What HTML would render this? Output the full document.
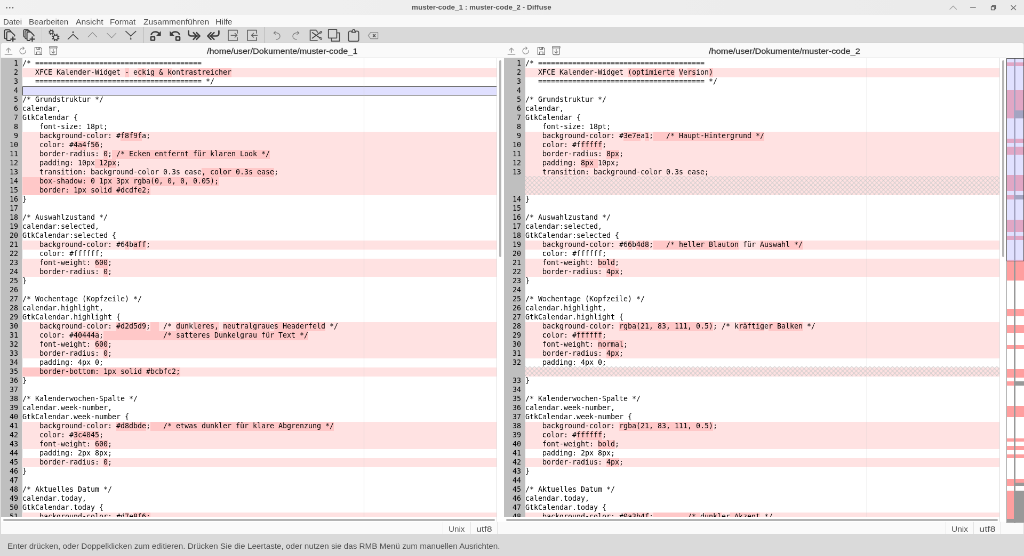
<!DOCTYPE html>
<html lang="de">
<head>
<meta charset="utf-8">
<title>muster-code_1 : muster-code_2 - Diffuse</title>
<style>
html,body{margin:0;padding:0;background:#dadada;overflow:hidden;}
body{width:1024px;height:556px;position:relative;}
#root{position:absolute;left:0;top:0;width:1920px;height:1043px;transform:scale(0.533333);transform-origin:0 0;
  font-family:"Liberation Sans","DejaVu Sans",sans-serif;font-size:14.5px;color:#505050;overflow:hidden;will-change:transform;}
#root div,#root svg,#root span{position:absolute;box-sizing:border-box;}
.t{white-space:nowrap;transform-origin:0 50%;line-height:20px;height:20px;}
#titlebar{left:0;top:0;width:1920px;height:28px;background:linear-gradient(90deg,#f1f1f1,#ebebeb);}
#menubar{left:0;top:28px;width:1920px;height:23px;background:#f9f9f9;}
#toolbar{left:0;top:51px;width:1920px;height:29.5px;background:#d9d9d9;border-bottom:1.2px solid #cecece;}
.ti{top:3.7px;width:22px;height:22px;overflow:visible;}
.tsep{top:0;width:1.2px;height:29.5px;background:#c6c6c6;}
#panel{left:1.5px;top:80.5px;width:1917px;height:921px;background:#fafafa;border-radius:3px 3px 0 0;}
.hi{top:6.5px;width:16px;height:16px;overflow:visible;}
/* code panes */
.pane{top:109px;height:859.5px;background:#fff;overflow:hidden;}
.gut{left:0;top:0;width:40px;height:100%;background:#bfbfbf;}
.in{left:0;top:1.6px;width:100%;}
.in p{margin:0;padding:0;height:17px;line-height:17px;white-space:pre;box-sizing:border-box;position:relative;
  font-family:"DejaVu Sans Mono","Liberation Mono",monospace;font-size:13.33px;letter-spacing:-0.025px;color:#000;}
.gut p{text-align:right;padding-right:7.5px;top:-0.8px;}
.code{left:40px;top:0;right:0;height:100%;}
.code .in p{padding-left:0.5px;}
.code p{line-height:15.3px;}
.code p.c{background:#ffe2e2;}
.code p.cur{background:#e0e0ff;border:1px solid #333;border-right:0;}
.code p.h{background-color:#ffe2e2;}
.code p.h svg{position:absolute;left:0;top:-1.5px;width:100%;height:18.5px;}
.code i{font-style:normal;background:#ffc8c8;display:inline-block;height:17px;vertical-align:top;}
.margin{top:0;width:1px;height:100%;background:#cccccc;left:680px;}
.vs{width:3.5px;background:#b6b6b6;border-radius:2px;}
.hs{height:3.5px;background:#b4b4b4;border-radius:2px;}
.trough{background:#fff;}
/* status row */
.ssep{top:978px;width:1px;height:23px;background:#e2e2e2;}
/* map */
#map{left:1887px;top:109px;width:33px;height:871.5px;background:#fff;overflow:hidden;}
#map div{position:absolute;}
#mapdiv{left:1901.4px;top:109px;width:2.8px;height:871.5px;background:#999;}
#mapleft{left:1886.5px;top:109px;width:1.4px;height:871.5px;background:#999;}
#view{left:1886.5px;top:109px;width:33.5px;height:381px;background:rgba(179,179,255,.4);border:1.6px solid #4a4a4a;}
#statusbar{left:0;top:1001.5px;width:1920px;height:41.5px;background:#dadada;}
</style>
</head>
<body>
<div id="root">
  <svg style="left:0;top:0;width:0;height:0"><defs><pattern id="hx" patternUnits="userSpaceOnUse" width="8.5" height="8.5"><path d="M-1 -1 L9.5 9.5 M9.5 -1 L-1 9.5" stroke="#cccccc" stroke-width="1.1" fill="none"/></pattern></defs></svg>
  <div id="titlebar">
    
<svg style="left:0;top:0;width:1920px;height:28px" viewBox="0 0 1920 28">
  <g fill="#555"><circle cx="12.6" cy="14.6" r="1.25"/><circle cx="18.3" cy="14.6" r="1.25"/><circle cx="24" cy="14.6" r="1.25"/></g>
  <g fill="none" stroke-linecap="round" stroke-linejoin="round">
    <path d="M1781 17.4 L1787.2 11.3 L1793.4 17.4" stroke="#9a9a9a" stroke-width="1.3"/>
    <path d="M1819.6 14.3 H1829.2" stroke="#7a7a7a" stroke-width="1.5"/>
    <path d="M1858.6 12.4 H1865 V18.4 H1858.6 Z M1860.6 12.2 V10.6 H1866.8 V16.4 H1865.2" stroke="#5a5a5a" stroke-width="1.5"/>
    <path d="M1896 10.4 L1904.6 18.6 M1904.6 10.4 L1896 18.6" stroke="#666" stroke-width="1.4"/>
  </g>
</svg>

    <div class="t" id="title" style="left:771.58px;top:4.06px;transform:scaleX(1.0377);font-size:13px;color:#555;font-weight:bold">muster-code_1 : muster-code_2 - Diffuse</div>
  </div>
  <div id="menubar">
    <div class="t" id="m1" style="left:6.11px;top:3.00px;transform:scaleX(1.0354);">Datei</div>
    <div class="t" id="m2" style="left:53.90px;top:3.00px;transform:scaleX(1.0596);">Bearbeiten</div>
    <div class="t" id="m3" style="left:141.56px;top:3.00px;transform:scaleX(1.0838);">Ansicht</div>
    <div class="t" id="m4" style="left:205.79px;top:3.00px;transform:scaleX(1.0480);">Format</div>
    <div class="t" id="m5" style="left:268.60px;top:3.00px;transform:scaleX(1.0857);">Zusammenführen</div>
    <div class="t" id="m6" style="left:404.02px;top:3.00px;transform:scaleX(1.0874);">Hilfe</div>
  </div>
  <div id="toolbar">
<svg class="ti" style="left:7.0px" viewBox="0 0 22 22"><g fill="none" stroke="#3c3c3c" stroke-width="2.0" stroke-linecap="round" stroke-linejoin="round" ><path d="M5 17.4 H3.4 a2 2 0 0 1 -2 -2 V3 a2 2 0 0 1 2 -2 H10.6 l2.6 2.6"/><path d="M12.4 21 H7.6 a2 2 0 0 1 -2 -2 V6.6 a2 2 0 0 1 2 -2 H13.8 L20.4 11 V12.6"/><path d="M17.2 14.4 V22.2 M13.2 18.4 H21.4" stroke-width="2.3"/></g></svg>
<svg class="ti" style="left:43.0px" viewBox="0 0 22 22"><g fill="none" stroke="#3c3c3c" stroke-width="2.0" stroke-linecap="round" stroke-linejoin="round" ><path d="M3 14.6 a2 2 0 0 1 -1.7 -2 V2.6 a2 2 0 0 1 2 -2 H9.4 l2.2 2.2" stroke-width="1.6"/><path d="M6 17.4 a2 2 0 0 1 -2 -2 V4.8 a2 2 0 0 1 2 -2 H12 l2.8 2.8" stroke-width="1.6"/><path d="M13 21 H9.6 a2 2 0 0 1 -2 -2 V7 a2 2 0 0 1 2 -2 H14.6 L20.6 11.4 V12.6"/><path d="M17.4 14.4 V22.2 M13.4 18.4 H21.6" stroke-width="2.3"/></g></svg>
<svg class="ti" style="left:90.0px" viewBox="0 0 22 22"><g fill="none" stroke="#3c3c3c" stroke-width="1.6" stroke-linecap="round" stroke-linejoin="round" ><circle cx="6.3" cy="5.3" r="3.0" stroke-width="1.5"/><path d="M9.35 6.56 L11.10 7.29" stroke-width="1.6" stroke-linecap="butt"/><path d="M7.56 8.35 L8.29 10.10" stroke-width="1.6" stroke-linecap="butt"/><path d="M5.04 8.35 L4.31 10.10" stroke-width="1.6" stroke-linecap="butt"/><path d="M3.25 6.56 L1.50 7.29" stroke-width="1.6" stroke-linecap="butt"/><path d="M3.25 4.04 L1.50 3.31" stroke-width="1.6" stroke-linecap="butt"/><path d="M5.04 2.25 L4.31 0.50" stroke-width="1.6" stroke-linecap="butt"/><path d="M7.56 2.25 L8.29 0.50" stroke-width="1.6" stroke-linecap="butt"/><path d="M9.35 4.04 L11.10 3.31" stroke-width="1.6" stroke-linecap="butt"/><circle cx="14.4" cy="15.2" r="4.3" stroke-width="1.9"/><path d="M18.65 16.96 L21.14 17.99" stroke-width="2.1" stroke-linecap="butt"/><path d="M16.16 19.45 L17.19 21.94" stroke-width="2.1" stroke-linecap="butt"/><path d="M12.64 19.45 L11.61 21.94" stroke-width="2.1" stroke-linecap="butt"/><path d="M10.15 16.96 L7.66 17.99" stroke-width="2.1" stroke-linecap="butt"/><path d="M10.15 13.44 L7.66 12.41" stroke-width="2.1" stroke-linecap="butt"/><path d="M12.64 10.95 L11.61 8.46" stroke-width="2.1" stroke-linecap="butt"/><path d="M16.16 10.95 L17.19 8.46" stroke-width="2.1" stroke-linecap="butt"/><path d="M18.65 13.44 L21.14 12.41" stroke-width="2.1" stroke-linecap="butt"/></g></svg>
<svg class="ti" style="left:126.0px" viewBox="0 0 22 22"><g fill="none" stroke="#444" stroke-width="1.6" stroke-linecap="round" stroke-linejoin="round" ><path d="M1.5 18.4 L11 9.4 L20.5 18.4"/><circle cx="11" cy="5.2" r="1.5" fill="#444" stroke="none"/></g></svg>
<svg class="ti" style="left:162.0px" viewBox="0 0 22 22"><g fill="none" stroke="#858585" stroke-width="1.15" stroke-linecap="round" stroke-linejoin="round" ><path d="M3.2 14.4 L11.4 5.8 L19.6 14.4"/></g></svg>
<svg class="ti" style="left:198.0px" viewBox="0 0 22 22"><g fill="none" stroke="#858585" stroke-width="1.15" stroke-linecap="round" stroke-linejoin="round" ><path d="M2.8 7.4 L11.3 15.8 L19.6 7.4"/></g></svg>
<svg class="ti" style="left:234.0px" viewBox="0 0 22 22"><g fill="none" stroke="#444" stroke-width="1.6" stroke-linecap="round" stroke-linejoin="round" ><path d="M1.8 3.7 L11.2 12.4 L20.8 3.7"/><path d="M11.2 12.6 V16" stroke-width="1" stroke="#666"/><circle cx="11.2" cy="17.9" r="1.4" fill="#444" stroke="none"/></g></svg>
<svg class="ti" style="left:281.0px" viewBox="0 0 22 22"><g fill="none" stroke="#3c3c3c" stroke-width="2" stroke-linecap="round" stroke-linejoin="round" ><path d="M2.6 10.4 C3 7 6.4 4.7 10.2 4.7 C13.8 4.7 16.2 6.2 17.6 8.6" stroke-width="2.7" stroke-linecap="butt"/><path d="M20.6 3.2 V12.2 H11.8 Z" fill="#3c3c3c" stroke="none"/><rect x="1.9" y="14" width="7.1" height="6.5" rx="0.8" stroke-width="2.5"/></g></svg>
<svg class="ti" style="left:317.0px" viewBox="0 0 22 22"><g fill="none" stroke="#3c3c3c" stroke-width="2" stroke-linecap="round" stroke-linejoin="round" transform="translate(22,0) scale(-1,1)"><path d="M2.6 10.4 C3 7 6.4 4.7 10.2 4.7 C13.8 4.7 16.2 6.2 17.6 8.6" stroke-width="2.7" stroke-linecap="butt"/><path d="M20.6 3.2 V12.2 H11.8 Z" fill="#3c3c3c" stroke="none"/><rect x="1.9" y="14" width="7.1" height="6.5" rx="0.8" stroke-width="2.5"/></g></svg>
<svg class="ti" style="left:353.0px" viewBox="0 0 22 22"><g fill="none" stroke="#3c3c3c" stroke-width="2" stroke-linecap="round" stroke-linejoin="round" ><path d="M0.6 3 V7.8 Q0.6 12.5 5.6 12.5 H17.5" stroke-width="2.7"/><path d="M9.6 6.2 L15.8 12.5 L9.6 18.8 M15.4 6.2 L21.6 12.5 L15.4 18.8" stroke-width="2.6"/></g></svg>
<svg class="ti" style="left:389.0px" viewBox="0 0 22 22"><g fill="none" stroke="#3c3c3c" stroke-width="2" stroke-linecap="round" stroke-linejoin="round" transform="translate(22,0) scale(-1,1)"><path d="M0.6 3 V7.8 Q0.6 12.5 5.6 12.5 H17.5" stroke-width="2.7"/><path d="M9.6 6.2 L15.8 12.5 L9.6 18.8 M15.4 6.2 L21.6 12.5 L15.4 18.8" stroke-width="2.6"/></g></svg>
<svg class="ti" style="left:425.0px" viewBox="0 0 22 22"><g fill="none" stroke="#646464" stroke-width="2" stroke-linecap="round" stroke-linejoin="round" ><path d="M20 7.2 V1.6 H3 V21 H20 V15.4" stroke-width="1.7"/><path d="M8.2 11.2 H19.4 M15.4 7.4 L19.6 11.2 L15.4 15" stroke-width="1.5"/></g></svg>
<svg class="ti" style="left:461.0px" viewBox="0 0 22 22"><g fill="none" stroke="#646464" stroke-width="2" stroke-linecap="round" stroke-linejoin="round" ><path d="M20 7.2 V1.6 H3 V21 H20 V15.4" stroke-width="1.7"/><path d="M21.4 11.2 H10.4 M14.6 7.4 L10.4 11.2 L14.6 15" stroke-width="1.5"/></g></svg>
<svg class="ti" style="left:508.0px" viewBox="0 0 22 22"><g fill="none" stroke="#777" stroke-width="1.25" stroke-linecap="round" stroke-linejoin="round" ><path d="M5.6 6.9 C10.5 5.6 16.6 7.6 17 12.6 C17.3 16 14 18.4 10 19.2"/><path d="M8.2 3.8 L5.4 7 L9.2 9.6"/></g></svg>
<svg class="ti" style="left:544.0px" viewBox="0 0 22 22"><g fill="none" stroke="#777" stroke-width="1.25" stroke-linecap="round" stroke-linejoin="round" transform="translate(22,0) scale(-1,1)"><path d="M5.6 6.9 C10.5 5.6 16.6 7.6 17 12.6 C17.3 16 14 18.4 10 19.2"/><path d="M8.2 3.8 L5.4 7 L9.2 9.6"/></g></svg>
<svg class="ti" style="left:580.0px" viewBox="0 0 22 22"><g fill="none" stroke="#444" stroke-width="2" stroke-linecap="round" stroke-linejoin="round" ><path d="M15.8 6 L12.8 1.7 H1.7 V21 H14.8" stroke-width="2.2" stroke="#6e6e6e"/><path d="M5.6 6 L20 16.2 M5.6 16.6 L20 6.2" stroke-width="1.8"/><ellipse cx="21.6" cy="5.4" rx="2.1" ry="1.5" transform="rotate(-35 21.6 5.4)" stroke-width="1.3"/><ellipse cx="21.6" cy="17.2" rx="2.1" ry="1.5" transform="rotate(35 21.6 17.2)" stroke-width="1.3"/></g></svg>
<svg class="ti" style="left:616.0px" viewBox="0 0 22 22"><g fill="none" stroke="#4a4a4a" stroke-width="1.8" stroke-linecap="round" stroke-linejoin="round" ><rect x="-0.2" y="0.2" width="15.6" height="16.2" rx="0.6"/><path d="M16.2 6.6 H20.6 V22.2 H5.6 V17.2"/></g></svg>
<svg class="ti" style="left:652.0px" viewBox="0 0 22 22"><g fill="none" stroke="#4a4a4a" stroke-width="1.8" stroke-linecap="round" stroke-linejoin="round" ><path d="M7.4 3.4 H4.4 a3 3 0 0 0 -3 3 V19.4 a3 3 0 0 0 3 3 H17.6 a3 3 0 0 0 3 -3 V6.4 a3 3 0 0 0 -3 -3 H14.8"/><path d="M7.6 5.6 V3.6 H9 Q9 0 11.1 0 Q13.2 0 13.2 3.6 H14.6 V5.6 Z" stroke-width="1.6"/></g></svg>
<svg class="ti" style="left:688.0px" viewBox="0 0 22 22"><g fill="none" stroke="#858585" stroke-width="1.15" stroke-linecap="round" stroke-linejoin="round" ><path d="M7 5.8 H20.6 V17.6 H7 L2.4 11.7 Z"/><path d="M11.6 9.6 L15.6 13.8 M15.6 9.6 L11.6 13.8" stroke="#555" stroke-width="1.7"/></g></svg>
<div class="tsep" style="left:77.6px"></div>
<div class="tsep" style="left:268.4px"></div>
<div class="tsep" style="left:495.4px"></div>
  </div>
  <div id="panel">
<svg class="hi" style="left:6.5px" viewBox="0 0 16 16"><g fill="none" stroke="#888" stroke-width="1.1" stroke-linecap="round" stroke-linejoin="round" ><path d="M1.2 15.3 H14.8"/><path d="M7.9 11.8 V4.4" stroke-width="2.2" stroke="#aaa" stroke-linecap="butt"/><path d="M3.6 7.3 L7.9 3 L12.4 7.3"/></g></svg>
<svg class="hi" style="left:34.5px" viewBox="0 0 16 16"><g fill="none" stroke="#808080" stroke-width="1.15" stroke-linecap="round" stroke-linejoin="round" transform="translate(-0.9,0.2)"><path d="M9.9 3.3 A5.6 5.6 0 1 0 13.1 7.4"/><path d="M7.8 0.9 L10.3 3.2 L7.8 5.7"/></g></svg>
<svg class="hi" style="left:62.5px" viewBox="0 0 16 16"><g fill="none" stroke="#6c6c6c" stroke-width="1.2" stroke-linecap="round" stroke-linejoin="round" ><path d="M1.4 1.6 H11.6 L14.4 4.4 V15.4 H1.4 Z"/><path d="M5 1.8 V5.6 H10.6 V1.8 M8.8 2.6 V4.6" stroke-width="1.1"/><path d="M4.6 15.2 V10.4 H11.2 V15.2" stroke-width="1.1"/></g></svg>
<svg class="hi" style="left:90.5px" viewBox="0 0 16 16"><g fill="none" stroke="#6c6c6c" stroke-width="1.15" stroke-linecap="round" stroke-linejoin="round" ><path d="M0.8 0.2 H15 V2.8 H0.8 Z M1.6 2.8 V13.6 a2 2 0 0 0 2 2 H12.2 a2 2 0 0 0 2 -2 V2.8"/><path d="M7.9 5 V12.4" stroke-width="2" stroke="#aaa" stroke-linecap="butt"/><path d="M5 10 L7.9 12.8 L10.8 10"/></g></svg>
<svg class="hi" style="left:949.5px" viewBox="0 0 16 16"><g fill="none" stroke="#888" stroke-width="1.1" stroke-linecap="round" stroke-linejoin="round" ><path d="M1.2 15.3 H14.8"/><path d="M7.9 11.8 V4.4" stroke-width="2.2" stroke="#aaa" stroke-linecap="butt"/><path d="M3.6 7.3 L7.9 3 L12.4 7.3"/></g></svg>
<svg class="hi" style="left:977.5px" viewBox="0 0 16 16"><g fill="none" stroke="#808080" stroke-width="1.15" stroke-linecap="round" stroke-linejoin="round" transform="translate(-0.9,0.2)"><path d="M9.9 3.3 A5.6 5.6 0 1 0 13.1 7.4"/><path d="M7.8 0.9 L10.3 3.2 L7.8 5.7"/></g></svg>
<svg class="hi" style="left:1005.5px" viewBox="0 0 16 16"><g fill="none" stroke="#6c6c6c" stroke-width="1.2" stroke-linecap="round" stroke-linejoin="round" ><path d="M1.4 1.6 H11.6 L14.4 4.4 V15.4 H1.4 Z"/><path d="M5 1.8 V5.6 H10.6 V1.8 M8.8 2.6 V4.6" stroke-width="1.1"/><path d="M4.6 15.2 V10.4 H11.2 V15.2" stroke-width="1.1"/></g></svg>
<svg class="hi" style="left:1033.5px" viewBox="0 0 16 16"><g fill="none" stroke="#6c6c6c" stroke-width="1.15" stroke-linecap="round" stroke-linejoin="round" ><path d="M0.8 0.2 H15 V2.8 H0.8 Z M1.6 2.8 V13.6 a2 2 0 0 0 2 2 H12.2 a2 2 0 0 0 2 -2 V2.8"/><path d="M7.9 5 V12.4" stroke-width="2" stroke="#aaa" stroke-linecap="butt"/><path d="M5 10 L7.9 12.8 L10.8 10"/></g></svg>
  </div>
  <div class="t" id="path1" style="left:388.12px;top:86.40px;transform:scaleX(1.1232);color:#333;-webkit-text-stroke:0.3px #333">/home/user/Dokumente/muster-code_1</div>
  <div class="t" id="path2" style="left:1329.36px;top:86.40px;transform:scaleX(1.1288);color:#333;-webkit-text-stroke:0.3px #333">/home/user/Dokumente/muster-code_2</div>

  <div style="left:1.5px;top:108.2px;width:1885px;height:1px;background:#dedede"></div>
  <!-- left pane -->
  <div class="pane" style="left:1.5px;width:930px">
    <div class="gut"><div class="in">
<p>1</p>
<p>2</p>
<p>3</p>
<p>4</p>
<p>5</p>
<p>6</p>
<p>7</p>
<p>8</p>
<p>9</p>
<p>10</p>
<p>11</p>
<p>12</p>
<p>13</p>
<p>14</p>
<p>15</p>
<p>16</p>
<p>17</p>
<p>18</p>
<p>19</p>
<p>20</p>
<p>21</p>
<p>22</p>
<p>23</p>
<p>24</p>
<p>25</p>
<p>26</p>
<p>27</p>
<p>28</p>
<p>29</p>
<p>30</p>
<p>31</p>
<p>32</p>
<p>33</p>
<p>34</p>
<p>35</p>
<p>36</p>
<p>37</p>
<p>38</p>
<p>39</p>
<p>40</p>
<p>41</p>
<p>42</p>
<p>43</p>
<p>44</p>
<p>45</p>
<p>46</p>
<p>47</p>
<p>48</p>
<p>49</p>
<p>50</p>
<p>51</p>
    </div></div>
    <div class="code"><div class="in">
<p>/* =======================================</p>
<p class="c">   XFCE Kalender-Widget <i>-</i> e<i>ck</i>i<i>g &amp; k</i>on<i>trastreicher</i></p>
<p>   ======================================= */</p>
<p class="cur"></p>
<p>/* Grundstruktur */</p>
<p>calendar,</p>
<p>GtkCalendar {</p>
<p>    font-size: 18pt;</p>
<p class="c">    background-color: #<i>f8f9f</i>a;</p>
<p class="c">    color: #<i>4a4</i>f<i>56</i>;</p>
<p class="c">    border-radius: <i>0</i>;<i> /* Ecken entfernt für klaren Look */</i></p>
<p class="c">    padding: 10px<i> 12px</i>;</p>
<p class="c">    transition: background-color 0.3s ease<i>, color 0.3s ease</i>;</p>
<p class="c"><i>    box-shadow: 0 1px 3px rgba(0, 0, 0, 0.05);</i></p>
<p class="c"><i>    border: 1px solid #dcdfe2;</i></p>
<p>}</p>
<p></p>
<p>/* Auswahlzustand */</p>
<p>calendar:selected,</p>
<p>GtkCalendar:selected {</p>
<p class="c">    background-color: #6<i>4</i>b<i>aff</i>;</p>
<p>    color: #ffffff;</p>
<p class="c">    font-weight: <i>600</i>;</p>
<p class="c">    border-radius: <i>0</i>;</p>
<p>}</p>
<p></p>
<p>/* Wochentage (Kopfzeile) */</p>
<p>calendar.highlight,</p>
<p>GtkCalendar.highlight {</p>
<p class="c">    background-color: <i>#d2d5d9</i>;<i>  </i> /* <i>dun</i>k<i>leres,</i> <i>neutralgrau</i>e<i>s Headerfeld</i> */</p>
<p class="c">    color: #<i>40444a</i>;<i>              /* satteres Dunkelgrau für Text */</i></p>
<p class="c">    font-weight: <i>600</i>;</p>
<p class="c">    border-radius: <i>0</i>;</p>
<p>    padding: 4px 0;</p>
<p class="c"><i>    border-bottom: 1px solid #bcbfc2;</i></p>
<p>}</p>
<p></p>
<p>/* Kalenderwochen-Spalte */</p>
<p>calendar.week-number,</p>
<p>GtkCalendar.week-number {</p>
<p class="c">    background-color: <i>#d8dbde</i>;<i>   /* etwas dunkler für klare Abgrenzung */</i></p>
<p class="c">    color: #<i>3c4045</i>;</p>
<p class="c">    font-weight: <i>600</i>;</p>
<p>    padding: 2px 8px;</p>
<p class="c">    border-radius: <i>0</i>;</p>
<p>}</p>
<p></p>
<p>/* Aktuelles Datum */</p>
<p>calendar.today,</p>
<p>GtkCalendar.today {</p>
<p class="c">    background-color: #d<i>7</i>e<i>8f6;</i></p>
    </div><div class="margin" style="left:640.5px"></div></div>
  </div>
  <div class="trough" style="left:932px;top:109px;width:12.5px;height:869px"></div>
  <div class="vs" style="left:936px;top:113px;height:368.5px"></div>
  <div class="trough" style="left:1.5px;top:968.5px;width:930px;height:9.5px"></div>
  <div class="hs" style="left:5.5px;top:973.2px;width:922px"></div>

  <!-- right pane -->
  <div class="pane" style="left:944.5px;width:930px">
    <div class="gut"><div class="in">
<p>1</p>
<p>2</p>
<p>3</p>
<p>4</p>
<p>5</p>
<p>6</p>
<p>7</p>
<p>8</p>
<p>9</p>
<p>10</p>
<p>11</p>
<p>12</p>
<p>13</p>
<p>&nbsp;</p>
<p>&nbsp;</p>
<p>14</p>
<p>15</p>
<p>16</p>
<p>17</p>
<p>18</p>
<p>19</p>
<p>20</p>
<p>21</p>
<p>22</p>
<p>23</p>
<p>24</p>
<p>25</p>
<p>26</p>
<p>27</p>
<p>28</p>
<p>29</p>
<p>30</p>
<p>31</p>
<p>32</p>
<p>&nbsp;</p>
<p>33</p>
<p>34</p>
<p>35</p>
<p>36</p>
<p>37</p>
<p>38</p>
<p>39</p>
<p>40</p>
<p>41</p>
<p>42</p>
<p>43</p>
<p>44</p>
<p>45</p>
<p>46</p>
<p>47</p>
<p>48</p>
    </div></div>
    <div class="code"><div class="in">
<p>/* =======================================</p>
<p class="c">   XFCE Kalender-Widget <i>(optimierte</i> <i>V</i>e<i>rs</i>ion<i>)</i></p>
<p>   ======================================= */</p>
<p></p>
<p>/* Grundstruktur */</p>
<p>calendar,</p>
<p>GtkCalendar {</p>
<p>    font-size: 18pt;</p>
<p class="c">    background-color: #<i>3e7e</i>a<i>1</i>;<i>   /* Haupt-Hintergrund */</i></p>
<p class="c">    color: #f<i>fffff</i>;</p>
<p class="c">    border-radius: <i>8px</i>;</p>
<p class="c">    padding: <i>8px </i>10px;</p>
<p class="c">    transition: background-color 0.3s ease;</p>
<p class="c h"><svg><rect width="100%" height="100%" fill="url(#hx)"/></svg></p>
<p class="c h"><svg><rect width="100%" height="100%" fill="url(#hx)"/></svg></p>
<p>}</p>
<p></p>
<p>/* Auswahlzustand */</p>
<p>calendar:selected,</p>
<p>GtkCalendar:selected {</p>
<p class="c">    background-color: #6<i>6</i>b<i>4d8</i>;<i>   /* heller Blauton</i> für <i>Auswahl */</i></p>
<p>    color: #ffffff;</p>
<p class="c">    font-weight: <i>bold</i>;</p>
<p class="c">    border-radius: <i>4px</i>;</p>
<p>}</p>
<p></p>
<p>/* Wochentage (Kopfzeile) */</p>
<p>calendar.highlight,</p>
<p>GtkCalendar.highlight {</p>
<p class="c">    background-color: <i>rgba(21, 83, 111, 0.5)</i>; /* k<i>räftig</i>e<i>r Balken</i> */</p>
<p class="c">    color: #<i>ffffff</i>;</p>
<p class="c">    font-weight: <i>normal</i>;</p>
<p class="c">    border-radius: <i>4px</i>;</p>
<p>    padding: 4px 0;</p>
<p class="c h"><svg><rect width="100%" height="100%" fill="url(#hx)"/></svg></p>
<p>}</p>
<p></p>
<p>/* Kalenderwochen-Spalte */</p>
<p>calendar.week-number,</p>
<p>GtkCalendar.week-number {</p>
<p class="c">    background-color: <i>rgba(21, 83, 111, 0.5)</i>;</p>
<p class="c">    color: #<i>ffffff</i>;</p>
<p class="c">    font-weight: <i>bold</i>;</p>
<p>    padding: 2px 8px;</p>
<p class="c">    border-radius: <i>4px</i>;</p>
<p>}</p>
<p></p>
<p>/* Aktuelles Datum */</p>
<p>calendar.today,</p>
<p>GtkCalendar.today {</p>
<p class="c">    background-color: #<i>0a3b4f</i>;<i>        /* </i>d<i>unkl</i>er<i> Akzent</i> */</p>
    </div><div class="margin" style="left:640.5px"></div></div>
  </div>
  <div class="trough" style="left:1875px;top:109px;width:11.5px;height:869px"></div>
  <div class="vs" style="left:1879px;top:113px;height:368.5px"></div>
  <div class="trough" style="left:944.5px;top:968.5px;width:930px;height:9.5px"></div>
  <div class="hs" style="left:948.5px;top:973.2px;width:922px"></div>

  <div style="left:931.2px;top:109px;width:1px;height:869px;background:#dddddd"></div>
  <div style="left:1874.2px;top:109px;width:1px;height:869px;background:#dddddd"></div>
  <!-- status row -->
  <div class="ssep" style="left:830px"></div>
  <div class="ssep" style="left:882px"></div>
  <div class="ssep" style="left:932px"></div>
  <div class="t" id="unix1" style="left:841.41px;top:982.00px;transform:scaleX(1.0500);">Unix</div>
  <div class="t" id="utf1" style="left:893.24px;top:982.00px;transform:scaleX(1.2231);">utf8</div>
  <div class="ssep" style="left:1773px"></div>
  <div class="ssep" style="left:1825px"></div>
  <div class="ssep" style="left:1876px"></div>
  <div class="t" id="unix2" style="left:1784.04px;top:982.00px;transform:scaleX(1.0637);">Unix</div>
  <div class="t" id="utf2" style="left:1836.26px;top:982.00px;transform:scaleX(1.2642);">utf8</div>

  <!-- overview map -->
  <div id="map">
<div style="top:7.5px;height:7.3px;left:0;right:0;background:#ff9f9f"></div>
<div style="top:60.4px;height:30.2px;left:0;right:0;background:#ff9f9f"></div>
<div style="top:90.6px;height:7.5px;left:0;right:0;background:#ff9f9f"></div>
<div style="top:98.1px;height:15.0px;left:0;width:16px;background:#ff9f9f"></div>
<div style="top:98.1px;height:15.0px;left:16px;right:0;background:#999999"></div>
<div style="top:151.3px;height:7.5px;left:0;right:0;background:#ff9f9f"></div>
<div style="top:166.3px;height:15.0px;left:0;right:0;background:#ff9f9f"></div>
<div style="top:219.0px;height:30.4px;left:0;right:0;background:#ff9f9f"></div>
<div style="top:256.9px;height:7.7px;left:0;width:16px;background:#ff9f9f"></div>
<div style="top:256.9px;height:7.7px;left:16px;right:0;background:#999999"></div>
<div style="top:303.2px;height:22.5px;left:0;right:0;background:#ff9f9f"></div>
<div style="top:333.0px;height:7.5px;left:0;right:0;background:#ff9f9f"></div>
<div style="top:378.4px;height:38.4px;left:0;right:0;background:#ff9f9f"></div>
<div style="top:470.2px;height:14.3px;left:0;right:0;background:#ff9f9f"></div>
<div style="top:500.4px;height:14.2px;left:0;right:0;background:#ff9f9f"></div>
<div style="top:537.9px;height:7.1px;left:0;right:0;background:#ff9f9f"></div>
<div style="top:582.8px;height:16.1px;left:0;right:0;background:#ff9f9f"></div>
<div style="top:606.4px;height:7.7px;left:0;width:16px;background:#ff9f9f"></div>
<div style="top:606.4px;height:7.7px;left:16px;right:0;background:#999999"></div>
<div style="top:652.3px;height:21.2px;left:0;right:0;background:#ff9f9f"></div>
<div style="top:712.5px;height:6.8px;left:0;right:0;background:#ff9f9f"></div>
<div style="top:727.3px;height:7.7px;left:0;right:0;background:#ff9f9f"></div>
<div style="top:743.3px;height:6.6px;left:0;right:0;background:#ff9f9f"></div>
<div style="top:788.8px;height:7.1px;left:0;right:0;background:#ff9f9f"></div>
<div style="top:795.9px;height:6.6px;left:0;width:16px;background:#ff9f9f"></div>
<div style="top:795.9px;height:6.6px;left:16px;right:0;background:#999999"></div>
<div style="top:810.8px;height:53.4px;left:0;width:16px;background:#ff9f9f"></div>
<div style="top:810.8px;height:53.4px;left:16px;right:0;background:#999999"></div>
<div style="top:864.2px;height:6.8px;left:0;right:0;background:#999999"></div>
  </div>
  <div id="mapleft"></div>
  <div id="mapdiv"></div>
  <div id="view"></div>

  <div id="statusbar">
    <div class="t" id="status" style="left:14.06px;top:12.20px;transform:scaleX(1.0532);">Enter drücken, oder Doppelklicken zum editieren. Drücken Sie die Leertaste, oder nutzen sie das RMB Menü zum manuellen Ausrichten.</div>
  </div>
</div>
</body>
</html>
